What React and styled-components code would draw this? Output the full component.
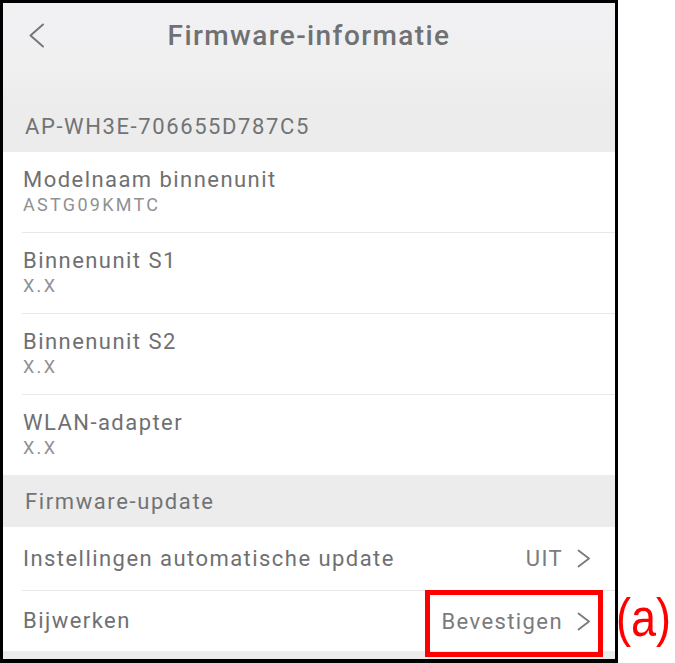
import React from "react";
import styled, { createGlobalStyle } from "styled-components";

const GlobalStyle = createGlobalStyle`
  html, body {
    margin: 0;
    padding: 0;
    background: #ffffff;
  }
  body {
    font-family: Roboto, "Noto Sans", sans-serif;
  }
`;

const infoRows = [
  { title: "Modelnaam binnenunit", value: "ASTG09KMTC" },
  { title: "Binnenunit S1", value: "X.X" },
  { title: "Binnenunit S2", value: "X.X" },
  { title: "WLAN-adapter", value: "X.X" },
];

const BackIcon = () => (
  <svg width="17" height="25" viewBox="0 0 17 25">
    <polyline
      points="15,1.5 2.5,12.5 15,23.5"
      fill="none"
      stroke="#777777"
      strokeWidth="2"
      strokeLinecap="round"
      strokeLinejoin="round"
    />
  </svg>
);

const ChevronIcon = () => (
  <svg width="14" height="19" viewBox="0 0 14 19">
    <polyline
      points="1.5,1.5 12,9.5 1.5,17.5"
      fill="none"
      stroke="#7a7a7a"
      strokeWidth="1.8"
      strokeLinecap="round"
      strokeLinejoin="round"
    />
  </svg>
);

const App = () => {
  return (
    <>
      <GlobalStyle />
      <Page>
        <Phone>
          <Header>
            <TopBar>
              <BackButton>
                <BackIcon />
              </BackButton>
              <Title>Firmware-informatie</Title>
              <span />
            </TopBar>
          </Header>
          <SectionHeader>AP-WH3E-706655D787C5</SectionHeader>
          <List>
            {infoRows.map((row) => (
              <InfoRow key={row.title}>
                <RowTitle>{row.title}</RowTitle>
                <RowSub>{row.value}</RowSub>
              </InfoRow>
            ))}
          </List>
          <SectionHeader>Firmware-update</SectionHeader>
          <List>
            <ActionRow $height={64}>
              <RowTitle>Instellingen automatische update</RowTitle>
              <Value>
                UIT
                <ChevronIcon />
              </Value>
            </ActionRow>
            <ActionRow $height={60}>
              <RowTitle>Bijwerken</RowTitle>
              <Value>
                Bevestigen
                <ChevronIcon />
              </Value>
              <Highlight />
            </ActionRow>
          </List>
          <Footer />
        </Phone>
        <Annotation>(a)</Annotation>
      </Page>
    </>
  );
};

const Page = styled.div`
  display: flex;
  align-items: flex-start;
  width: 675px;
  height: 663px;
  overflow: hidden;
`;

const Phone = styled.div`
  flex-shrink: 0;
  width: 612px;
  height: 656px;
  border: 3px solid #000000;
  border-bottom-width: 4px;
  display: flex;
  flex-direction: column;
  background: #ffffff;
`;

const Header = styled.div`
  height: 97px;
  background: linear-gradient(
    to bottom,
    #f1f1f3 0%,
    #f0f0f1 70%,
    #ececec 100%
  );
`;

const TopBar = styled.div`
  height: 64px;
  display: grid;
  grid-template-columns: 1fr auto 1fr;
  align-items: center;
`;

const BackButton = styled.div`
  display: flex;
  align-items: center;
  padding-left: 25px;
  padding-top: 1px;
`;

const Title = styled.div`
  font-size: 28px;
  font-weight: 500;
  color: #6f7173;
  letter-spacing: 1.4px;
`;

const SectionHeader = styled.div`
  height: 52px;
  display: flex;
  align-items: center;
  padding-left: 22px;
  background: #ececec;
  font-size: 22px;
  color: #727375;
  letter-spacing: 1.6px;
`;

const List = styled.div`
  display: flex;
  flex-direction: column;
  background: #ffffff;
`;

const InfoRow = styled.div`
  box-sizing: border-box;
  height: 81px;
  margin-left: 19px;
  padding: 15px 0 0 1px;
  border-bottom: 1px solid #e8e8e8;
  display: flex;
  flex-direction: column;

  &:last-child {
    height: 80px;
    border-bottom: none;
  }
`;

const RowTitle = styled.div`
  font-size: 22px;
  line-height: 26px;
  color: #6f7072;
  letter-spacing: 1.45px;
`;

const RowSub = styled.div`
  margin-top: 1px;
  font-size: 18px;
  line-height: 22px;
  color: #909193;
  letter-spacing: 2.3px;
`;

const ActionRow = styled.div`
  position: relative;
  box-sizing: border-box;
  height: ${(p) => p.$height}px;
  margin-left: 19px;
  padding: 0 24px 0 1px;
  border-bottom: 1px solid #e8e8e8;
  display: flex;
  align-items: center;
  justify-content: space-between;

  &:last-child {
    border-bottom: none;
  }
`;

const Value = styled.div`
  display: flex;
  align-items: center;
  gap: 14px;
  font-size: 22px;
  color: #7a7b7d;
  letter-spacing: 1.4px;
`;

const Highlight = styled.div`
  position: absolute;
  right: 12px;
  top: -1px;
  width: 178px;
  height: 67px;
  box-sizing: border-box;
  border: 5px solid #ff0000;
  pointer-events: none;
`;

const Footer = styled.div`
  height: 8px;
  background: #ececec;
`;

const Annotation = styled.div`
  flex-shrink: 0;
  margin-top: 591px;
  margin-left: -2px;
  font-family: "Liberation Sans", Arial, sans-serif;
  font-size: 53px;
  line-height: 1;
  color: #ff0000;
  transform: scaleX(0.85);
  transform-origin: left center;
  white-space: nowrap;
`;

export default App;
